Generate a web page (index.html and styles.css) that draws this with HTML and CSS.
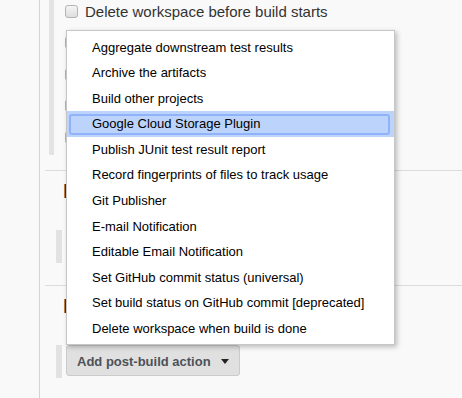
FILE: index.html
```html
<!DOCTYPE html>
<html lang="en">
<head>
    <meta charset="UTF-8">
    <meta name="viewport" content="width=device-width, initial-scale=1.0">
    <title>Post-build Actions</title>
    <link rel="stylesheet" href="styles.css">
</head>
<body>
    <div class="gutter"></div>
    <div class="main">
        <div class="section first">
            <div class="options">
                <label class="check-row"><input type="checkbox"> Delete workspace before build starts</label>
                <label class="check-row"><input type="checkbox"></label>
                <label class="check-row"><input type="checkbox"></label>
                <label class="check-row"><input type="checkbox"></label>
                <label class="check-row"><input type="checkbox"></label>
            </div>
        </div>
        <div class="section">
            <div class="section-header">Build</div>
            <div class="add-wrap">
                <span class="add-btn hidden-btn"></span>
            </div>
        </div>
        <div class="section">
            <div class="section-header">Post-build Actions</div>
            <div class="add-wrap">
                <button class="add-btn">Add post-build action <span class="caret"></span></button>
            </div>
        </div>
    </div>

    <ul class="menu">
        <li>Aggregate downstream test results</li>
        <li>Archive the artifacts</li>
        <li>Build other projects</li>
        <li class="selected">Google Cloud Storage Plugin</li>
        <li>Publish JUnit test result report</li>
        <li>Record fingerprints of files to track usage</li>
        <li>Git Publisher</li>
        <li>E-mail Notification</li>
        <li>Editable Email Notification</li>
        <li>Set GitHub commit status (universal)</li>
        <li>Set build status on GitHub commit [deprecated]</li>
        <li>Delete workspace when build is done</li>
    </ul>
</body>
</html>
```

FILE: styles.css
```css
body {
    font-family: "Liberation Sans", Arial, sans-serif;
    background: #f9f9f9;
    color: #333;
    margin: 0;
    display: flex;
    height: 398px;
    overflow: hidden;
}
.gutter {
    width: 39px;
    border-right: 1px solid #d3d3d3;
    flex-shrink: 0;
}
.main {
    flex: 1;
}
.section {
    margin-left: 5px;
    border-bottom: 1px solid #dcdcdc;
    padding: 8px 0 22px;
}
.section.first {
    height: 171px;
    padding: 0;
    box-sizing: border-box;
}
.options {
    margin-left: 4px;
    border-left: 5px solid #e3e3e3;
    height: 155px;
    padding: 1px 0 0 11px;
    box-sizing: border-box;
}
.check-row {
    display: flex;
    align-items: center;
    height: 20px;
    margin-bottom: 11.5px;
    font-size: 15px;
    color: #333;
}
.check-row input {
    appearance: none;
    width: 13px;
    height: 13px;
    margin: 0 7px 0 0;
    border: 1px solid #b4b4b4;
    border-radius: 3px;
    background: linear-gradient(#f5f5f5, #dedede);
}
/* only the first stroke of the header shows beside the menu */
.section-header {
    font-size: 21px;
    line-height: 24px;
    font-weight: bold;
    color: #333;
    margin-left: 18px;
    width: 3px;
    overflow: hidden;
    white-space: nowrap;
}
.add-wrap {
    margin: 27px 0 0 11px;
    border-left: 6px solid #e2e2e2;
    padding: 0 0 2px 4px;
    display: flex;
}
.add-btn {
    display: inline-flex;
    align-items: center;
    box-sizing: border-box;
    height: 31px;
    padding: 1px 10px 0 10px;
    border: 1px solid #cbcbcb;
    border-radius: 3px;
    background: #e0e0e0;
    font-family: "Liberation Sans", Arial, sans-serif;
    font-size: 13px;
    font-weight: bold;
    color: #4d5259;
}
.hidden-btn {
    width: 140px;
}
.caret {
    margin-left: 10px;
    border-top: 5px solid #222;
    border-left: 4px solid transparent;
    border-right: 4px solid transparent;
}
.menu {
    position: absolute;
    left: 66px;
    top: 30px;
    width: 329px;
    height: 315px;
    box-sizing: border-box;
    margin: 0;
    padding: 3.5px 0 0;
    list-style: none;
    background: white;
    border: 1px solid #c6c6c6;
    box-shadow: 2px 2px 5px rgba(0, 0, 0, 0.25);
}
.menu li {
    position: relative;
    height: 25.6px;
    line-height: 25.6px;
    padding-left: 25px;
    font-size: 13px;
    color: #000;
}
.menu li.selected {
    background: #bcd3fc;
}
.menu li.selected::after {
    content: "";
    position: absolute;
    top: 3px;
    left: 2px;
    right: 4px;
    bottom: 2px;
    border: 2px solid #90b2f8;
    border-radius: 3px;
}
```
